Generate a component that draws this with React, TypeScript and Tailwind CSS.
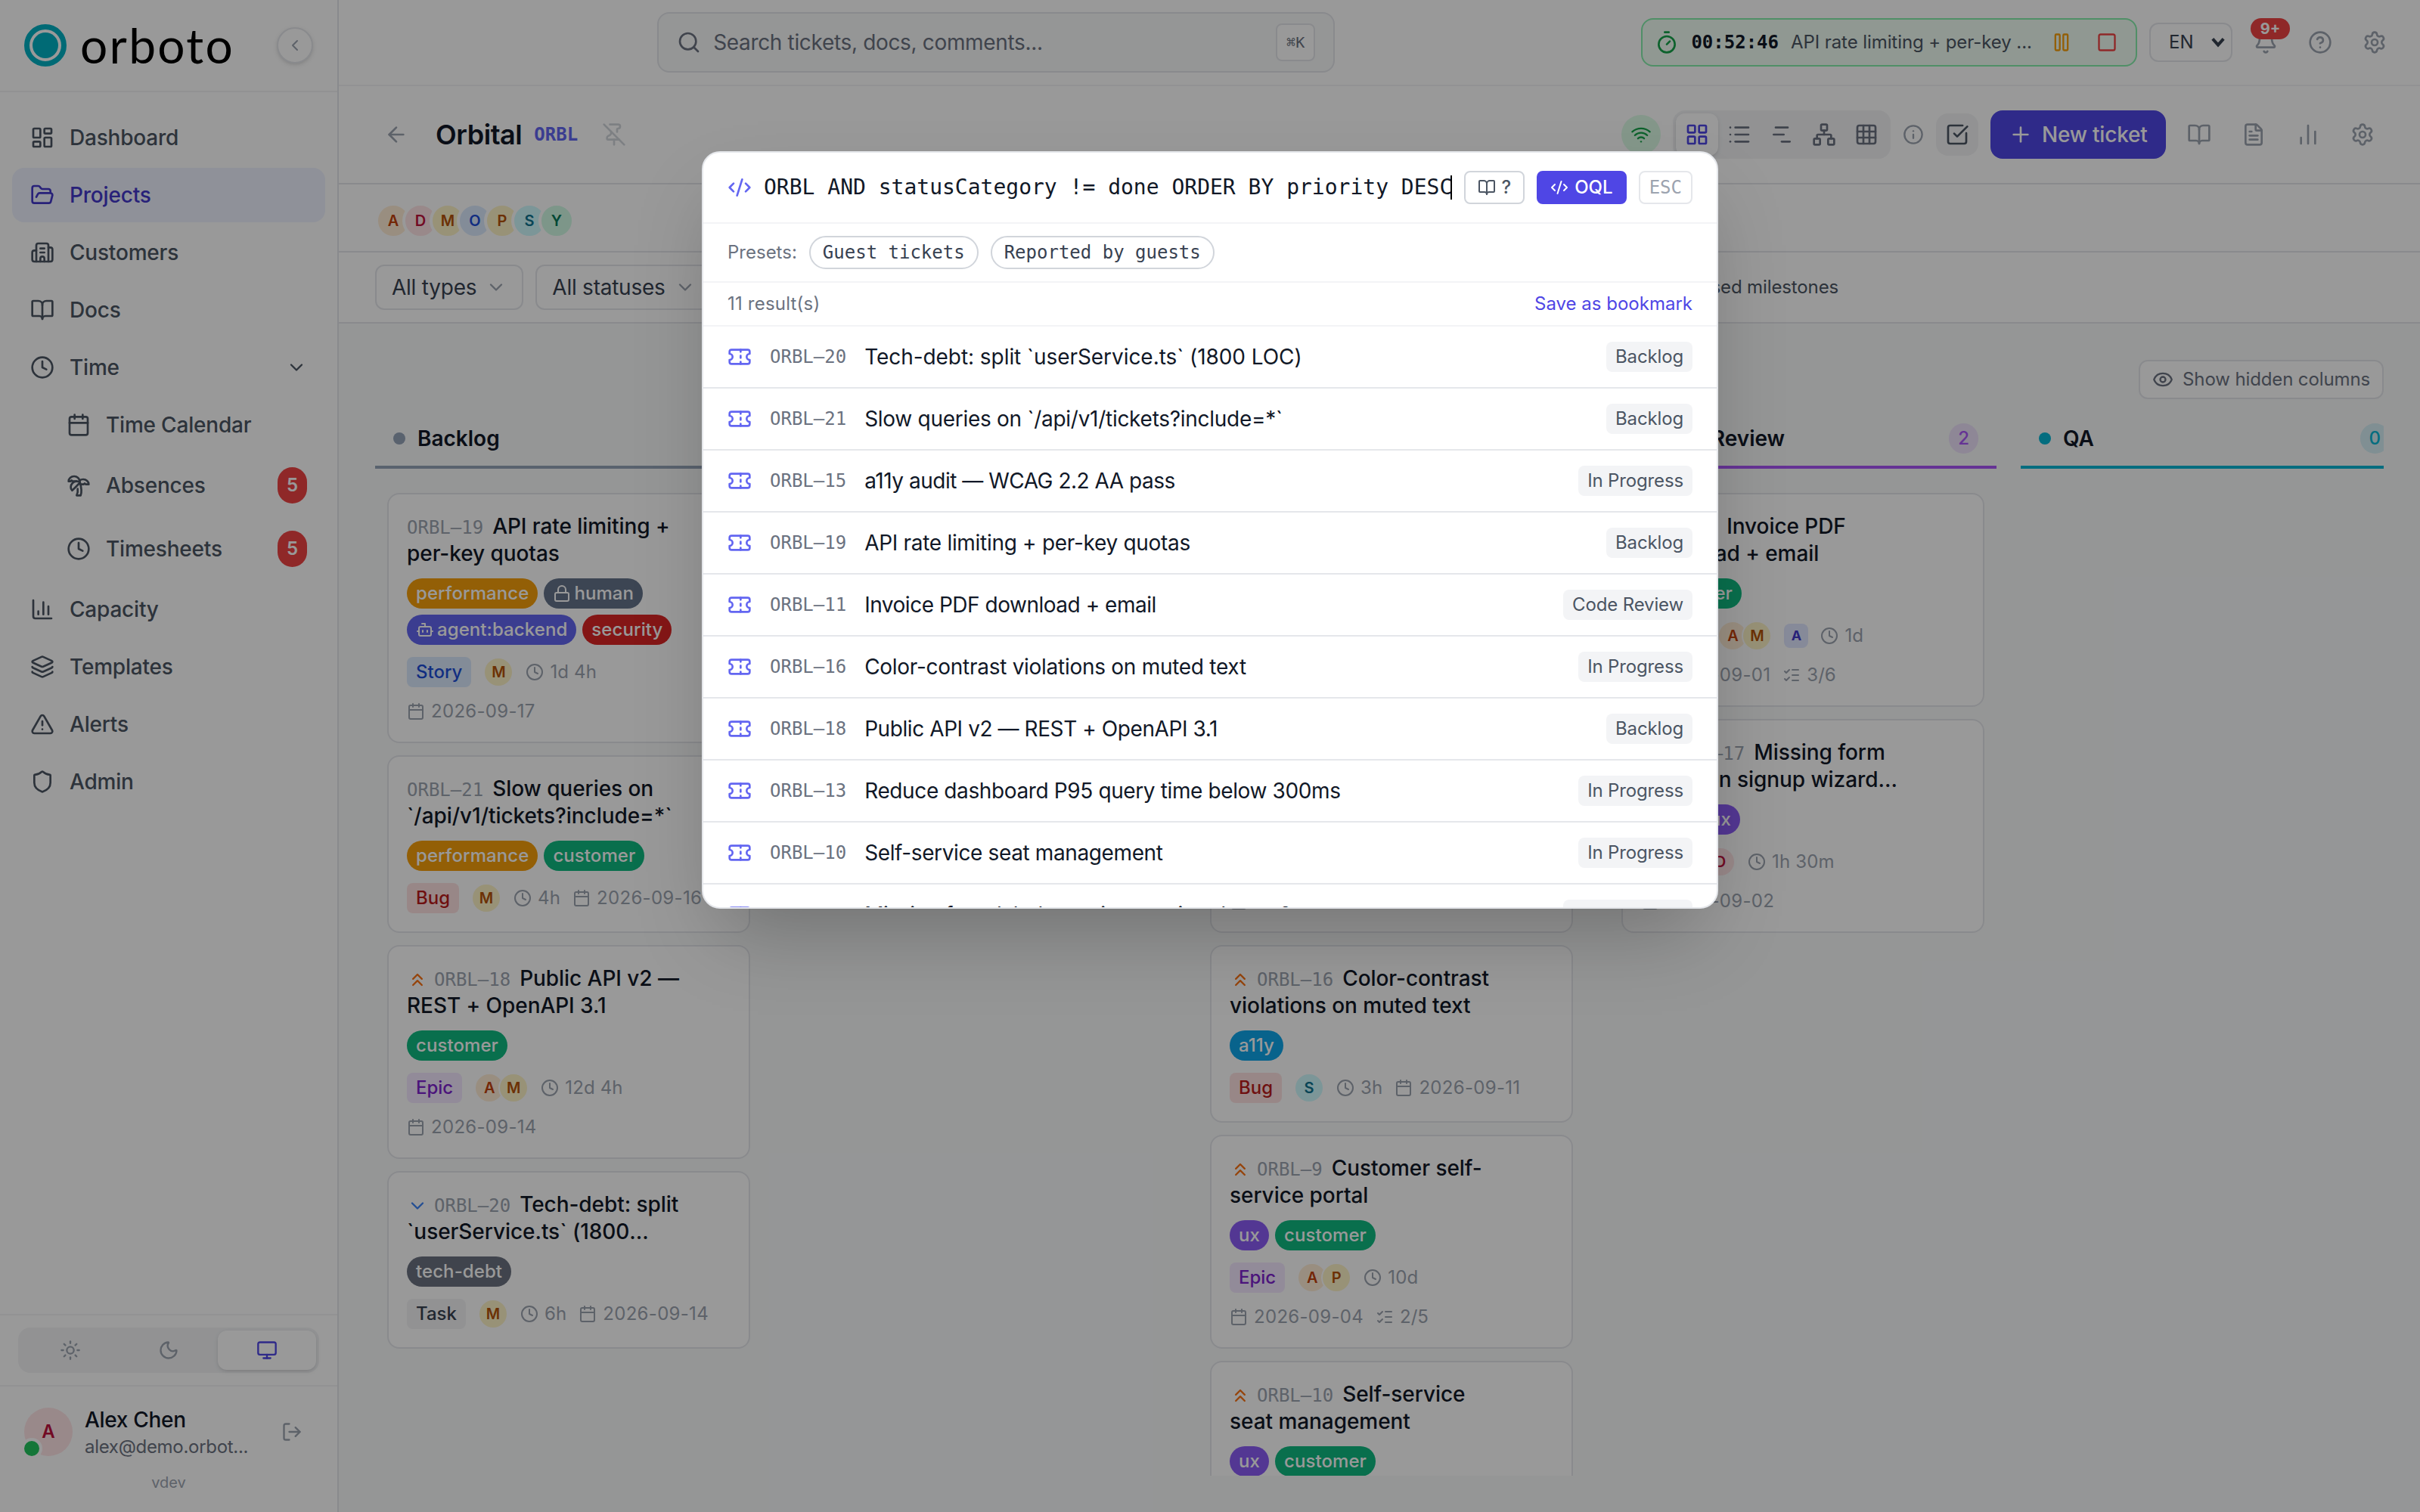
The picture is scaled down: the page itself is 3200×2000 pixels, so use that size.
import {
  ArrowLeft,
  Bell,
  BookOpen,
  Bot,
  Building2,
  Calendar,
  ChartNoAxesColumn,
  ChartNoAxesGantt,
  ChevronDown,
  ChevronLeft,
  ChevronsUp,
  CircleQuestionMark,
  Clock,
  CodeXml,
  Eye,
  FileText,
  FolderOpen,
  Grid3x3,
  Info,
  Layers,
  LayoutDashboard,
  LayoutGrid,
  List,
  ListChecks,
  Lock,
  LogOut,
  Monitor,
  Moon,
  Network,
  Pause,
  PinOff,
  Plus,
  Search,
  Settings,
  Shield,
  Square,
  SquareCheckBig,
  Sun,
  Ticket,
  Timer,
  TreePalm,
  TriangleAlert,
  Wifi,
} from "lucide-react";
import clsx from "clsx";

const mono = "font-['DejaVu_Sans_Mono',monospace]";

// sRGB palette, one line per hue
const palette = [
  "[--color-gray-50:#f9fafb] [--color-gray-100:#f3f4f6] [--color-gray-200:#e5e7eb] [--color-gray-300:#d1d5db]",
  "[--color-gray-400:#9ca3af] [--color-gray-500:#6b7280] [--color-gray-600:#4b5563] [--color-gray-700:#374151]",
  "[--color-gray-900:#111827] [--color-slate-400:#94a3b8]",
  "[--color-indigo-50:#eef2ff] [--color-indigo-100:#e0e7ff] [--color-indigo-500:#6366f1] [--color-indigo-600:#4f46e5] [--color-indigo-700:#4338ca]",
  "[--color-red-100:#fee2e2] [--color-red-500:#ef4444] [--color-red-700:#b91c1c]",
  "[--color-green-50:#f0fdf4] [--color-green-100:#dcfce7] [--color-green-300:#86efac] [--color-green-500:#22c55e] [--color-green-600:#16a34a]",
  "[--color-amber-100:#fef3c7] [--color-amber-500:#f59e0b] [--color-amber-700:#b45309]",
  "[--color-orange-100:#ffedd5] [--color-orange-500:#f97316] [--color-orange-700:#c2410c]",
  "[--color-rose-100:#ffe4e6] [--color-rose-700:#be123c]",
  "[--color-blue-100:#dbeafe] [--color-blue-500:#3b82f6] [--color-blue-700:#1d4ed8]",
  "[--color-cyan-100:#cffafe] [--color-cyan-500:#06b6d4] [--color-cyan-700:#0e7490]",
  "[--color-emerald-100:#d1fae5] [--color-emerald-700:#047857]",
  "[--color-purple-100:#f3e8ff] [--color-purple-500:#a855f7] [--color-purple-700:#7e22ce]",
];

const avatarColors: Record<string, string> = {
  A: "bg-orange-100 text-orange-700",
  D: "bg-rose-100 text-rose-700",
  M: "bg-amber-100 text-amber-700",
  O: "bg-blue-100 text-blue-700",
  P: "bg-amber-100 text-amber-700",
  S: "bg-cyan-100 text-cyan-700",
  Y: "bg-emerald-100 text-emerald-700",
};

const labelColors: Record<string, string> = {
  performance: "bg-[#f59e0b]",
  human: "bg-[#64748b]",
  "agent:backend": "bg-[#6366f1]",
  security: "bg-[#dc2626]",
  customer: "bg-[#10b981]",
  ux: "bg-[#8b5cf6]",
  a11y: "bg-[#0ea5e9]",
  "tech-debt": "bg-[#6b7280]",
};

const typeColors: Record<string, string> = {
  Story: "bg-blue-100 text-blue-700",
  Bug: "bg-red-100 text-red-700",
  Epic: "bg-purple-100 text-purple-700",
  Task: "bg-gray-100 text-gray-700",
};

type CardData = {
  code: string;
  title: string;
  priority?: "high" | "low";
  labels: string[];
  type: string;
  people: string[];
  agent?: string;
  estimate: string;
  date: string;
  checklist?: string;
};

const backlog: CardData[] = [
  {
    code: "ORBL–19",
    title: "API rate limiting + per-key quotas",
    labels: ["performance", "human", "agent:backend", "security"],
    type: "Story",
    people: ["M"],
    estimate: "1d 4h",
    date: "2026-09-17",
  },
  {
    code: "ORBL–21",
    title: "Slow queries on `/api/v1/tickets?include=*`",
    labels: ["performance", "customer"],
    type: "Bug",
    people: ["M"],
    estimate: "4h",
    date: "2026-09-16",
  },
  {
    code: "ORBL–18",
    title: "Public API v2 — REST + OpenAPI 3.1",
    priority: "high",
    labels: ["customer"],
    type: "Epic",
    people: ["A", "M"],
    estimate: "12d 4h",
    date: "2026-09-14",
  },
  {
    code: "ORBL–20",
    title: "Tech-debt: split `userService.ts` (1800 LOC)",
    priority: "low",
    labels: ["tech-debt"],
    type: "Task",
    people: ["M"],
    estimate: "6h",
    date: "2026-09-14",
  },
];

const inProgress: CardData[] = [
  {
    code: "ORBL–15",
    title: "a11y audit — WCAG 2.2 AA pass",
    labels: ["a11y"],
    type: "Story",
    people: ["S"],
    estimate: "2d",
    date: "2026-09-09",
    checklist: "1/4",
  },
  {
    code: "ORBL–13",
    title: "Reduce dashboard P95 query time below 300ms",
    labels: ["performance"],
    type: "Story",
    people: ["M"],
    estimate: "3d 4h",
    date: "2026-09-10",
  },
  {
    code: "ORBL–16",
    title: "Color-contrast violations on muted text",
    priority: "high",
    labels: ["a11y"],
    type: "Bug",
    people: ["S"],
    estimate: "3h",
    date: "2026-09-11",
  },
  {
    code: "ORBL–9",
    title: "Customer self-service portal",
    priority: "high",
    labels: ["ux", "customer"],
    type: "Epic",
    people: ["A", "P"],
    estimate: "10d",
    date: "2026-09-04",
    checklist: "2/5",
  },
  {
    code: "ORBL–10",
    title: "Self-service seat management",
    priority: "high",
    labels: ["ux", "customer"],
    type: "Story",
    people: ["P"],
    estimate: "2d",
    date: "2026-09-05",
  },
];

const review: CardData[] = [
  {
    code: "ORBL–11",
    title: "Invoice PDF download + email",
    labels: ["customer"],
    type: "Story",
    people: ["A", "M"],
    agent: "A",
    estimate: "1d",
    date: "2026-09-01",
    checklist: "3/6",
  },
  {
    code: "ORBL–17",
    title: "Missing form labels on signup wizard step 2",
    priority: "high",
    labels: ["a11y", "ux"],
    type: "Bug",
    people: ["D"],
    estimate: "1h 30m",
    date: "2026-09-02",
  },
];

const results = [
  ["ORBL–20", "Tech-debt: split `userService.ts` (1800 LOC)", "Backlog", "tracking-[-0.03px]"],
  ["ORBL–21", "Slow queries on `/api/v1/tickets?include=*`", "Backlog", "tracking-[-0.14px]"],
  ["ORBL–15", "a11y audit — WCAG 2.2 AA pass", "In Progress", "tracking-[-0.24px]"],
  ["ORBL–19", "API rate limiting + per-key quotas", "Backlog", "tracking-[-0.15px]"],
  ["ORBL–11", "Invoice PDF download + email", "Code Review", "tracking-[-0.24px]"],
  ["ORBL–16", "Color-contrast violations on muted text", "In Progress", "tracking-[-0.14px]"],
  ["ORBL–18", "Public API v2 — REST + OpenAPI 3.1", "Backlog", "tracking-[-0.21px]"],
  ["ORBL–13", "Reduce dashboard P95 query time below 300ms", "In Progress", "tracking-[-0.19px]"],
  ["ORBL–10", "Self-service seat management", "In Progress", "tracking-[-0.19px]"],
  ["ORBL–17", "Missing form labels on signup wizard step 2", "Code Review", "tracking-[-0.19px]"],
];

function NavItem({ icon: Icon, label, active, sub, badge, chevron }: any) {
  return (
    <a
      className={clsx(
        "flex items-center gap-2.5 rounded-lg py-2 pr-3 text-sm font-medium tracking-[-0.1px]",
        sub ? "pl-9" : "pl-3",
        active ? "bg-indigo-50 text-indigo-700" : "text-gray-600"
      )}
    >
      <Icon size={16} />
      <span className="flex-1">{label}</span>
      {badge && (
        <span className="flex h-6 items-center rounded-full bg-red-500 px-1.5 text-xs font-semibold text-white">
          {badge}
        </span>
      )}
      {chevron && <ChevronDown size={14} />}
    </a>
  );
}

// Column chart with its axis
function CapacityIcon({ size = 16 }: { size?: number }) {
  return (
    <svg
      width={size}
      height={size}
      viewBox="0 0 24 24"
      fill="none"
      stroke="currentColor"
      strokeWidth="2"
      strokeLinecap="round"
      strokeLinejoin="round"
    >
      <path d="M3 3v16a2 2 0 0 0 2 2h16" />
      <path d="M18 17V9" />
      <path d="M13 17V5" />
      <path d="M8 17v-3" />
    </svg>
  );
}

function Sidebar() {
  return (
    <aside className="flex w-56 shrink-0 flex-col border-r border-gray-200 bg-white">
      <div className="flex h-[61px] items-center justify-between border-b border-gray-100 px-4">
        <div className="flex items-center gap-[9px]">
          <svg width="28" height="28" viewBox="0 0 28 28">
            <circle cx="14" cy="14" r="12.25" fill="none" stroke="#00b1c4" strokeWidth="3.5" />
            <circle cx="14" cy="14" r="8.5" fill="#00b1c4" />
          </svg>
          <span className="font-['Lato',sans-serif] text-[32px] leading-7 tracking-[1.15px] text-black">orboto</span>
        </div>
        <button className="flex h-6 w-6 items-center justify-center rounded-full border border-gray-200 bg-white text-gray-400 shadow-sm">
          <ChevronLeft size={12} />
        </button>
      </div>

      <nav className="flex flex-1 flex-col gap-0.5 px-2 py-3">
        <NavItem icon={LayoutDashboard} label="Dashboard" />
        <NavItem icon={FolderOpen} label="Projects" active />
        <NavItem icon={Building2} label="Customers" />
        <NavItem icon={BookOpen} label="Docs" />
        <NavItem icon={Clock} label="Time" chevron />
        <NavItem icon={Calendar} label="Time Calendar" sub />
        <NavItem icon={TreePalm} label="Absences" sub badge="5" />
        <NavItem icon={Clock} label="Timesheets" sub badge="5" />
        <NavItem icon={CapacityIcon} label="Capacity" />
        <NavItem icon={Layers} label="Templates" />
        <NavItem icon={TriangleAlert} label="Alerts" />
        <NavItem icon={Shield} label="Admin" />
      </nav>

      <div className="border-t border-gray-100 px-3 py-2">
        <div className="flex rounded-lg bg-gray-100 p-0.5 text-gray-400">
          <button className="flex h-[26px] flex-1 items-center justify-center">
            <Sun size={14} />
          </button>
          <button className="flex h-[26px] flex-1 items-center justify-center">
            <Moon size={14} />
          </button>
          <button className="flex h-[26px] flex-1 items-center justify-center rounded-md bg-white text-indigo-600 shadow-sm">
            <Monitor size={14} />
          </button>
        </div>
      </div>

      <div className="border-t border-gray-100 pt-3 pb-3">
        <div className="flex items-center gap-2 px-4 pb-2">
          <div className="relative flex h-8 w-8 items-center justify-center rounded-full bg-rose-100 text-xs font-semibold text-rose-700">
            A
            <span className="absolute bottom-0 left-0 h-2.5 w-2.5 rounded-full bg-green-500 ring-2 ring-white" />
          </div>
          <div className="min-w-0 flex-1">
            <p className="text-sm font-medium tracking-[-0.15px] text-gray-900">Alex Chen</p>
            <p className="text-xs tracking-[-0.15px] text-gray-500">alex@demo.orbot...</p>
          </div>
          <button className="p-[7px] text-gray-400">
            <LogOut size={14} />
          </button>
        </div>
        <p className="text-center text-[10px] leading-[15px] text-gray-400">vdev</p>
      </div>
    </aside>
  );
}

function TopBar() {
  return (
    <div className="flex h-[57px] shrink-0 items-center gap-2 border-b border-gray-100 bg-white px-4">
      <div className="flex flex-1 justify-center">
        <div className="flex h-10 w-md items-center gap-2 rounded-lg border border-gray-200 bg-gray-50 px-3 text-gray-500">
          <Search size={16} />
          <span className="flex-1 text-sm tracking-[-0.17px]">Search tickets, docs, comments...</span>
          <kbd
            className={clsx(
              mono,
              "rounded border border-gray-200 bg-white px-1.5 py-1 text-[10px] leading-[15px]"
            )}
          >
            ⌘K
          </kbd>
        </div>
      </div>

      <div className="flex h-8 items-center gap-2 rounded-lg border border-green-300 bg-green-50 px-2">
        <Timer size={16} className="text-green-600" />
        <span className={clsx(mono, "text-xs font-bold text-gray-900")}>00:52:46</span>
        <span className="w-40 overflow-hidden text-xs tracking-[-0.04px] whitespace-nowrap text-gray-600">
          API rate limiting + per-key ...
        </span>
        <button className="p-1 text-amber-500">
          <Pause size={14} />
        </button>
        <button className="p-1 text-red-500">
          <Square size={14} />
        </button>
      </div>

      <div className="flex h-[26px] w-[55px] items-center justify-between rounded-md border border-gray-200 bg-white pr-1 pl-3 text-xs text-gray-700">
        EN
        <svg width="9" height="7" viewBox="0 0 9 7" fill="none" stroke="currentColor" strokeWidth="2">
          <path d="M0.9 1.2 4.5 5.2 8.1 1.2" />
        </svg>
      </div>

      <button className="relative p-1.5 text-gray-400">
        <Bell size={16} />
        <span className="absolute -top-0.5 left-1 flex h-3.5 w-[26px] items-center justify-center rounded-full bg-red-500 text-[10px] font-bold text-white">
          9+
        </span>
      </button>
      <button className="p-1.5 text-gray-400">
        <CircleQuestionMark size={16} />
      </button>
      <button className="p-1.5 text-gray-400">
        <Settings size={16} />
      </button>
    </div>
  );
}

function PageHeader() {
  return (
    <div className="flex h-[65px] shrink-0 items-center gap-2 border-b border-gray-200 bg-white px-6">
      <button className="mr-1 p-1.5 text-gray-400">
        <ArrowLeft size={16} />
      </button>
      <h1 className="text-lg font-semibold tracking-[-0.22px] text-gray-900">Orbital</h1>
      <span className={clsx(mono, "text-xs font-bold text-indigo-500")}>ORBL</span>
      <button className="ml-1 p-1 text-gray-300">
        <PinOff size={16} />
      </button>

      <div className="ml-auto flex items-center gap-2 text-gray-400">
        <span className="rounded-full bg-green-100 p-1.5 text-green-600">
          <Wifi size={14} />
        </span>
        <div className="flex rounded-lg bg-gray-100 p-0.5 text-gray-500">
          <button className="rounded-md bg-white p-1.5 text-indigo-600 shadow-sm">
            <LayoutGrid size={16} />
          </button>
          <button className="p-1.5">
            <List size={16} />
          </button>
          <button className="p-1.5">
            <ChartNoAxesGantt size={16} />
          </button>
          <button className="p-1.5">
            <Network size={16} />
          </button>
          <button className="p-1.5">
            <Grid3x3 size={16} />
          </button>
        </div>
        <Info size={14} />
        <button className="rounded-lg bg-gray-100 p-1.5 text-gray-600">
          <SquareCheckBig size={16} />
        </button>
        <button className="flex h-8 w-[116px] items-center gap-1.5 rounded-lg bg-indigo-600 px-3 text-sm font-medium tracking-[-0.1px] whitespace-nowrap text-white">
          <Plus size={16} />
          New ticket
        </button>
        <button className="p-1.5">
          <BookOpen size={16} />
        </button>
        <button className="p-1.5">
          <FileText size={16} />
        </button>
        <button className="p-1.5">
          <ChartNoAxesColumn size={16} />
        </button>
        <button className="p-1.5">
          <Settings size={16} />
        </button>
      </div>
    </div>
  );
}

function FilterSelect({ label }: { label: string }) {
  return (
    <button className="flex items-center gap-1.5 rounded-md border border-gray-200 bg-white px-2.5 py-1 text-sm tracking-[-0.12px] whitespace-nowrap text-gray-700">
      {label}
      <ChevronDown size={14} className="text-gray-400" />
    </button>
  );
}

function Filters() {
  return (
    <>
      <div className="flex shrink-0 -space-x-1.5 border-b border-gray-200 bg-white px-6 pt-3 pb-2">
        {["A", "D", "M", "O", "P", "S", "Y"].map((p) => (
          <span
            key={p}
            className={clsx(
              "flex h-6 w-6 items-center justify-center rounded-full border-2 border-white text-[10px] font-semibold",
              avatarColors[p]
            )}
          >
            {p}
          </span>
        ))}
      </div>
      <div className="flex shrink-0 items-center gap-2 border-b border-gray-200 bg-white px-6 py-2">
        <FilterSelect label="All types" />
        <FilterSelect label="All statuses" />
        <div className="flex w-[573px] gap-2">
          <FilterSelect label="All priorities" />
          <FilterSelect label="All assignees" />
          <FilterSelect label="All labels" />
        </div>
        <label className="flex items-center gap-1.5 text-xs tracking-[-0.06px] text-gray-600">
          <span className="h-3.5 w-3.5 rounded border border-gray-300" />
          Show closed milestones
        </label>
      </div>
    </>
  );
}

function Label({ name }: { name: string }) {
  return (
    <span
      className={clsx(
        "flex items-center gap-0.5 rounded-full px-1.5 py-0.5 text-xs font-medium tracking-[0.04px] text-white",
        labelColors[name]
      )}
    >
      {name === "human" && <Lock size={12} />}
      {name === "agent:backend" && <Bot size={12} />}
      {name}
    </span>
  );
}

function TicketCard({ card }: { card: CardData }) {
  return (
    <div className="rounded-lg border border-gray-200 bg-white p-3">
      <p className="line-clamp-2 h-[35.5px] w-[182px] pt-[0.5px] text-sm leading-[17.75px] font-medium tracking-[-0.03px] text-gray-900">
        {card.priority === "high" && <ChevronsUp size={14} className="mr-1 inline text-orange-500" />}
        {card.priority === "low" && <ChevronDown size={14} className="mr-1 inline text-blue-500" />}
        <span className={clsx(mono, "mr-1.5 text-xs leading-none font-normal tracking-normal text-gray-400")}>
          {card.code}
        </span>
        {card.title}
      </p>
      <div className="mt-2 flex flex-wrap gap-1">
        {card.labels.map((l) => (
          <Label key={l} name={l} />
        ))}
      </div>
      <div className="mt-2 flex flex-wrap items-center gap-2 text-xs text-gray-400">
        <span className={clsx("rounded px-1.5 py-0.5 font-medium", typeColors[card.type])}>{card.type}</span>
        <div className="flex -space-x-1">
          {card.people.map((p) => (
            <span
              key={p}
              className={clsx(
                "flex h-5 w-5 items-center justify-center rounded-full border border-white text-[10px] font-semibold",
                avatarColors[p]
              )}
            >
              {p}
            </span>
          ))}
        </div>
        {card.agent && (
          <span className="flex h-4 w-4 items-center justify-center rounded bg-indigo-100 text-[9px] font-bold text-indigo-700">
            {card.agent}
          </span>
        )}
        <span className="flex items-center gap-1 tracking-[0.08px]">
          <Clock size={12} />
          {card.estimate}
        </span>
        <span className="flex items-center gap-1 tracking-[0.15px]">
          <Calendar size={12} />
          {card.date}
        </span>
        {card.checklist && (
          <span className="flex items-center gap-1">
            <ListChecks size={12} />
            {card.checklist}
          </span>
        )}
      </div>
    </div>
  );
}

type ColumnProps = {
  name: string;
  count: number;
  border: string;
  dot: string;
  pill: string;
  cards: CardData[];
};

function Column({ name, count, border, dot, pill, cards }: ColumnProps) {
  return (
    <div className="w-64 shrink-0">
      <div className={clsx("flex items-center gap-2 border-b-2 px-3 py-2", border)}>
        <span className={clsx("h-2 w-2 rounded-full", dot)} />
        <span className="flex-1 text-sm font-semibold text-gray-900">{name}</span>
        <span className={clsx("rounded-full px-1.5 py-0.5 text-xs font-medium", pill)}>{count}</span>
      </div>
      <div className="mt-4 flex flex-col gap-2 px-2">
        {cards.map((c) => (
          <TicketCard key={c.code} card={c} />
        ))}
      </div>
    </div>
  );
}

function Board() {
  return (
    <div className="flex min-h-0 flex-1 flex-col bg-gray-50 p-6">
      <button className="flex items-center gap-1.5 self-end rounded-md border border-gray-200 bg-white px-2 py-1 text-xs tracking-[-0.06px] text-gray-500">
        <Eye size={14} />
        Show hidden columns
      </button>
      <div className="mt-2 flex min-h-0 flex-1 gap-4 overflow-hidden">
        <Column
          name="Backlog"
          count={4}
          border="border-slate-400"
          dot="bg-slate-400"
          pill="bg-slate-400/15 text-slate-400"
          cards={backlog}
        />
        <Column
          name="To Do"
          count={0}
          border="border-blue-500"
          dot="bg-blue-500"
          pill="bg-blue-500/15 text-blue-500"
          cards={[]}
        />
        <Column
          name="In Progress"
          count={5}
          border="border-amber-500"
          dot="bg-amber-500"
          pill="bg-amber-500/15 text-amber-500"
          cards={inProgress}
        />
        <Column
          name="Code Review"
          count={2}
          border="border-purple-500"
          dot="bg-purple-500"
          pill="bg-purple-500/15 text-purple-500"
          cards={review}
        />
        <Column
          name="QA"
          count={0}
          border="border-cyan-500"
          dot="bg-cyan-500"
          pill="bg-cyan-500/15 text-cyan-500"
          cards={[]}
        />
      </div>
    </div>
  );
}

function SearchModal() {
  return (
    <div className="absolute inset-0 flex items-start justify-center bg-black/40 pt-[100px]">
      <div className="w-2xl overflow-hidden rounded-xl border border-gray-200 bg-white shadow-2xl">
        <div className="flex items-center gap-2 border-b border-gray-100 px-4 py-3 text-xs">
          <CodeXml size={16} className="shrink-0 text-indigo-500" />
          {/* query is scrolled to its end, with the caret on the last column */}
          <div
            className={clsx(
              mono,
              "flex h-[22px] min-w-0 flex-1 items-center overflow-hidden text-sm whitespace-pre text-gray-900"
            )}
          >
            ORBL AND statusCategory != done ORDER BY priority DESC
            <span className="-ml-px h-4 w-px shrink-0 bg-black" />
          </div>
          <button className="flex items-center gap-1 rounded border border-gray-300 px-2 py-0.5 font-medium text-gray-600">
            <BookOpen size={12} />?
          </button>
          <button className="flex items-center gap-1 rounded border border-indigo-600 bg-indigo-600 px-2 py-0.5 font-medium text-white">
            <CodeXml size={12} />
            OQL
          </button>
          <kbd className={clsx(mono, "rounded border border-gray-200 px-1.5 py-0.5 text-gray-400")}>ESC</kbd>
        </div>

        <div className="flex items-center gap-2 border-b border-gray-100 px-4 py-2 text-xs">
          <span className="text-gray-500">Presets:</span>
          <button className={clsx(mono, "rounded-full border border-gray-300 px-2 py-0.5 text-gray-700")}>
            Guest tickets
          </button>
          <button className={clsx(mono, "rounded-full border border-gray-300 px-2 py-0.5 text-gray-700")}>
            Reported by guests
          </button>
        </div>

        <div className="flex items-center justify-between border-b border-gray-100 px-4 py-1.5 text-xs">
          <span className="tracking-[0.1px] text-gray-500">11 result(s)</span>
          <a className="text-indigo-600">Save as bookmark</a>
        </div>

        <ul className="h-96 divide-y divide-gray-200 overflow-hidden">
          {results.map(([code, title, status, tracking]) => (
            <li key={code} className="flex items-center gap-3 px-4 py-2.5">
              <Ticket size={16} className="text-indigo-500" />
              <span className={clsx(mono, "text-xs text-gray-500")}>{code}</span>
              <span className={clsx("flex-1 text-sm text-gray-900", tracking)}>{title}</span>
              <span className="rounded bg-gray-100 px-1.5 py-0.5 text-xs leading-4 tracking-[-0.07px] text-gray-600">
                {status}
              </span>
            </li>
          ))}
        </ul>
      </div>
    </div>
  );
}

export default function App() {
  return (
    <div
      className={clsx(
        "relative flex h-[1000px] w-[1600px] overflow-hidden bg-white font-['Inter',sans-serif] text-gray-900 antialiased [zoom:2]",
        palette
      )}
    >
      <Sidebar />
      <main className="flex min-w-0 flex-1 flex-col">
        <TopBar />
        <PageHeader />
        <Filters />
        <Board />
      </main>
      <SearchModal />
    </div>
  );
}
